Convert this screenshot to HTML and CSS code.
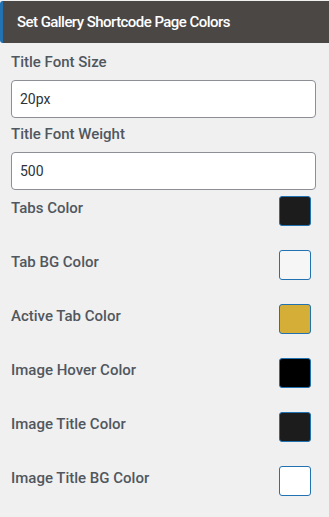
FILE: index.html
```html
<!DOCTYPE html>
<html lang="en">
<head>
    <meta charset="UTF-8">
    <meta name="viewport" content="width=device-width, initial-scale=1.0">
    <title>Gallery Shortcode Page Colors</title>
    <link rel="stylesheet" href="styles.css">
</head>
<body>

    <header class="panel-head">
        Set Gallery Shortcode Page Colors
    </header>

    <div class="panel-body">
        <label class="field-label">Title Font Size</label>
        <input class="text-input" type="text" value="20px">

        <label class="field-label second">Title Font Weight</label>
        <input class="text-input" type="text" value="500">

        <div class="color-list">
            <div class="color-row">
                <span class="color-label">Tabs Color</span>
                <span class="swatch" style="background: #1c1c1c;"></span>
            </div>
            <div class="color-row">
                <span class="color-label">Tab BG Color</span>
                <span class="swatch" style="background: #f6f6f7;"></span>
            </div>
            <div class="color-row">
                <span class="color-label">Active Tab Color</span>
                <span class="swatch" style="background: #d4ae37;"></span>
            </div>
            <div class="color-row">
                <span class="color-label">Image Hover Color</span>
                <span class="swatch" style="background: #000000;"></span>
            </div>
            <div class="color-row">
                <span class="color-label">Image Title Color</span>
                <span class="swatch" style="background: #1c1c1c;"></span>
            </div>
            <div class="color-row">
                <span class="color-label">Image Title BG Color</span>
                <span class="swatch" style="background: #ffffff;"></span>
            </div>
        </div>
    </div>

</body>
</html>
```

FILE: styles.css
```css
/* General Styling */
body {
    font-family: Roboto, "Liberation Sans", sans-serif;
    background: #f0f0f1;
    color: #50575e;
    margin: 0;
    padding: 1px 0 0 0;
}

/* Panel Header */
.panel-head {
    background: #4b4745;
    color: #ffffff;
    font-size: 15px;
    font-weight: 500;
    letter-spacing: -0.55px;
    height: 42px;
    line-height: 42px;
    padding-left: 14px;
    border-left: 3px solid #2271b1;
    border-radius: 3px 0 0 3px;
}

/* Panel Body */
.panel-body {
    padding: 0 13px 0 11px;
    display: flex;
    flex-direction: column;
}

.field-label {
    font-size: 15px;
    font-weight: 500;
    line-height: 20px;
    margin-top: 9px;
    margin-bottom: 8px;
}

.field-label.second {
    margin-top: 6px;
}

.text-input {
    box-sizing: border-box;
    width: 100%;
    height: 38px;
    padding: 0 8px;
    font-family: Roboto, "Liberation Sans", sans-serif;
    font-size: 14px;
    color: #2c3338;
    background: #ffffff;
    border: 1px solid #8c8f94;
    border-radius: 4px;
    margin: 0;
}

/* Color Pickers */
.color-list {
    display: flex;
    flex-direction: column;
    gap: 24px;
    margin-top: 6px;
    padding-right: 5px;
}

.color-row {
    display: flex;
    justify-content: space-between;
    align-items: flex-start;
}

.color-label {
    font-size: 15px;
    font-weight: 500;
    line-height: 20px;
    padding-top: 2px;
}

.swatch {
    box-sizing: border-box;
    width: 32px;
    height: 30px;
    border: 1px solid #2271b1;
    border-radius: 3px;
}
```
